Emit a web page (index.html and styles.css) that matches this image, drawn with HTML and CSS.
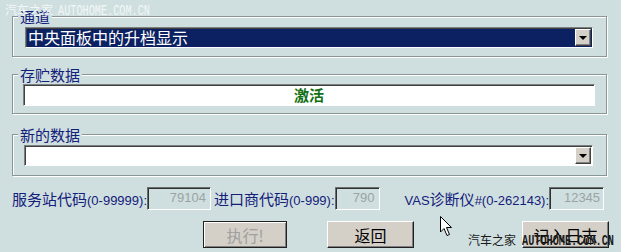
FILE: index.html
```html
<!DOCTYPE html>
<html lang="zh-CN">

<head>
    <meta charset="UTF-8">
    <title>VAS 编码</title>
    <link rel="stylesheet" href="styles.css">
</head>

<body>
    <div class="watermark wm-top"><span class="wm-cn">汽车之家</span><span class="wm-en">AUTOHOME.COM.CN</span></div>

    <fieldset class="group g-channel">
        <legend>通道</legend>
        <div class="combo dark">
            <span class="combo-text">中央面板中的升档显示</span>
            <span class="combo-btn"><i class="arrow"></i></span>
        </div>
    </fieldset>

    <fieldset class="group g-stored">
        <legend>存贮数据</legend>
        <div class="field stored">激活</div>
    </fieldset>

    <fieldset class="group g-new">
        <legend>新的数据</legend>
        <div class="combo">
            <span class="combo-text"></span>
            <span class="combo-btn"><i class="arrow"></i></span>
        </div>
    </fieldset>

    <div class="codes">
        <label class="code-label">服务站代码<span class="num">(0-99999):</span></label>
        <div class="code-box w-station">79104</div>
        <label class="code-label l-importer">进口商代码<span class="num">(0-999):</span></label>
        <div class="code-box w-importer">790</div>
        <label class="code-label l-vas"><span class="num">VAS</span>诊断仪<span class="num">#(0-262143):</span></label>
        <div class="code-box w-vas">12345</div>
    </div>

    <div class="actions">
        <button class="btn b-run" disabled>执行!</button>
        <button class="btn b-back">返回</button>
        <button class="btn b-log">记入日志</button>
    </div>

    <div class="watermark wm-bottom"><span class="wm-cn">汽车之家</span><span class="wm-en">AUTOHOME.COM.CN</span></div>

    <svg class="cursor" width="14" height="22" viewBox="0 0 14 22">
        <path d="M1.5 1.5 L1.5 17 L5 13.5 L8 20.5 L10.5 19.5 L7.5 12.5 L12.5 12.5 Z" fill="#fff" stroke="#000" stroke-width="1" />
    </svg>
</body>

</html>
```

FILE: styles.css
```css
body {
    margin: 0;
    padding-top: 8px;
    width: 621px;
    height: 252px;
    overflow: hidden;
    background-color: #cfdfdf;
    font-family: "Noto Sans CJK SC", "Liberation Sans", sans-serif;
    color: #13207a;
    position: relative;
}

/* group boxes */
.group {
    margin: 0 14px 0 12px;
    padding: 0;
    min-width: 0;
    border: 1px solid #8a9696;
    box-shadow: inset 1px 1px 0 #fff, 1px 1px 0 #fff;
}

.group legend {
    margin-left: 5px;
    padding: 0 2px;
    font-size: 15px;
    line-height: 17px;
    background-color: #cfdfdf;
    color: #13207a;
}

.g-stored {
    margin-top: 9px;
}

.g-new {
    margin-top: 12px;
}

/* combo boxes */
.combo {
    display: flex;
    align-items: center;
    height: 21px;
    box-sizing: border-box;
    margin: 2px 13px 8px 12px;
    background-color: #fff;
    border: 1px solid;
    border-color: #7a8080 #fff #fff #7a8080;
    box-shadow: inset 1px 1px 0 #404040;
}

.g-new .combo {
    margin: 2px 13px 9px 11px;
}

.combo.dark {
    background-color: #0b2161;
}

.combo-text {
    flex: 1;
    padding-left: 2px;
    font-size: 16px;
    line-height: 17px;
    color: #fff;
    white-space: nowrap;
}

.combo-btn {
    display: flex;
    align-items: center;
    justify-content: center;
    width: 16px;
    height: 17px;
    box-sizing: border-box;
    margin-right: 1px;
    background-color: #d4d0c8;
    border: 1px solid;
    border-color: #fff #404040 #404040 #fff;
    box-shadow: inset -1px -1px 0 #808080;
}

.arrow {
    width: 0;
    height: 0;
    border-left: 4px solid transparent;
    border-right: 4px solid transparent;
    border-top: 4px solid #000;
}

/* stored data field */
.field {
    height: 22px;
    box-sizing: border-box;
    margin: 1px 11px 7px 10px;
    background-color: #fff;
    border: 1px solid;
    border-color: #7a8080 #fff #fff #7a8080;
    box-shadow: inset 1px 1px 0 #404040;
}

.stored {
    text-align: center;
    font-size: 15px;
    font-weight: bold;
    line-height: 20px;
    color: #137013;
}

/* code inputs */
.codes {
    display: flex;
    align-items: center;
    margin-top: 11px;
    padding-left: 12px;
    height: 23px;
}

.code-label {
    font-size: 15px;
    white-space: nowrap;
}

.num {
    font-family: "Liberation Sans", sans-serif;
    font-size: 13px;
}

.l-importer {
    margin-left: 3px;
}

.l-vas {
    margin-left: 25px;
}

.code-box {
    height: 23px;
    box-sizing: border-box;
    padding-right: 4px;
    text-align: right;
    font-family: "Liberation Sans", sans-serif;
    font-size: 13px;
    line-height: 20px;
    color: #9aa4a4;
    border: 1px solid;
    border-color: #6a7070 #fff #fff #6a7070;
    box-shadow: inset 1px 1px 0 #303030;
}

.w-station {
    width: 64px;
}

.w-importer {
    width: 45px;
}

.w-vas {
    width: 55px;
    padding-right: 3px;
}

/* buttons */
.actions {
    display: flex;
    margin-top: 11px;
}

.btn {
    height: 27px;
    padding: 0;
    font-family: "Noto Sans CJK SC", sans-serif;
    font-size: 16px;
    line-height: 20px;
    color: #000;
    background-color: #d4d0c8;
    border: 1px solid;
    border-color: #fff #202020 #202020 #fff;
    box-shadow: inset -1px -1px 0 #808080;
}

.b-run {
    width: 84px;
    margin-left: 203px;
    color: #a0a0a0;
    border-color: #202020;
    box-shadow: inset 1px 1px 0 #fff, inset -1px -1px 0 #808080;
}

.b-back {
    width: 87px;
    margin-left: 40px;
}

.b-log {
    width: 87px;
    margin-left: 108px;
}

/* watermarks and pointer */
.watermark {
    position: absolute;
    display: flex;
    align-items: baseline;
    white-space: nowrap;
}

.wm-cn {
    font-size: 12px;
}

.wm-en {
    display: inline-block;
    font-family: "Liberation Mono", monospace;
    font-size: 14px;
    transform: scaleX(0.73);
    transform-origin: left;
}

.wm-top {
    left: 5px;
    top: 1px;
    color: rgba(255, 255, 255, 0.75);
}

.wm-top .wm-en {
    margin-left: 5px;
}

.wm-bottom {
    left: 468px;
    top: 231px;
    color: #1a1a1a;
}

.wm-bottom .wm-en {
    margin-left: 6px;
    font-weight: bold;
}

.cursor {
    position: absolute;
    left: 439px;
    top: 215px;
}
```
